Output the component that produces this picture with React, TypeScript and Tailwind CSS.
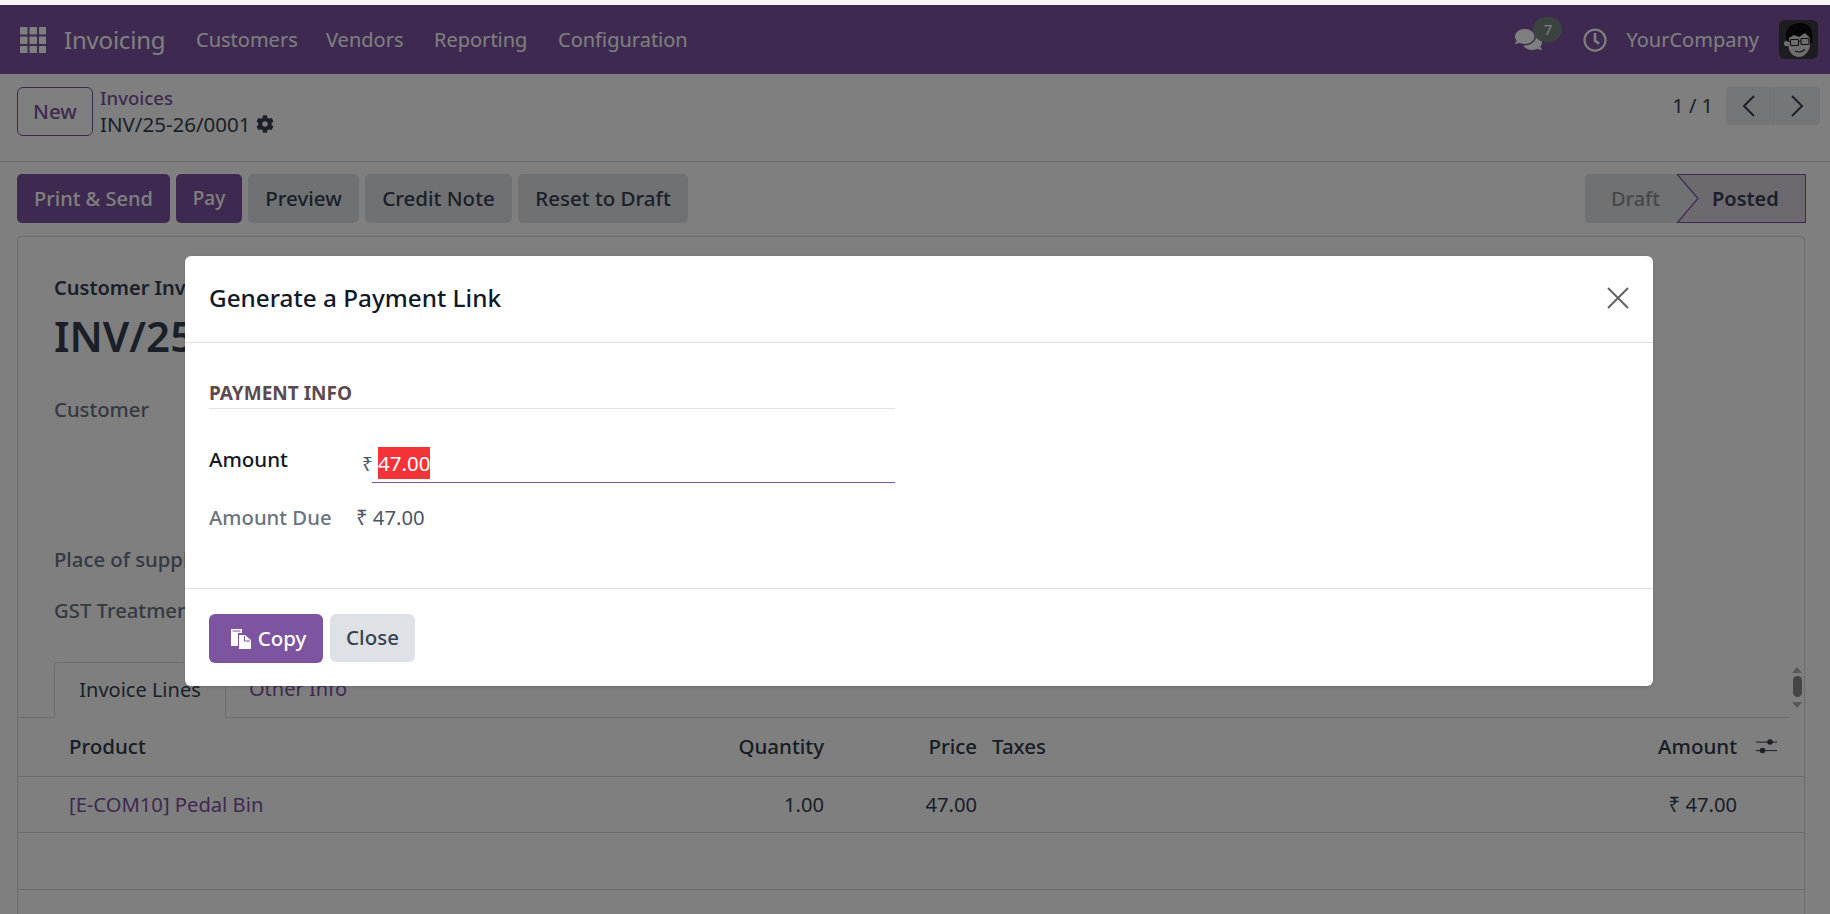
import React from "react";
import { FaCog, FaComments, FaRegClock } from "react-icons/fa";

const Grid = () => (
  <svg width="26" height="26" viewBox="0 0 26 26" fill="#fff">
    {[0, 9.5, 19].map((y) =>
      [0, 9.5, 19].map((x) => <rect key={`${x}-${y}`} x={x} y={y} width="7.5" height="7.5" rx="0.8" />)
    )}
  </svg>
);

const Avatar = () => (
  <svg width="39" height="39" viewBox="0 0 39 39">
    <rect width="39" height="39" rx="6" fill="#3a3a42" />
    <path d="M7 20 C5 9 12 3 21 3 C31 3 35 10 33 22 L30 24 L8 24 Z" fill="#0a0a0c" />
    <path d="M10 18 L15 15 L20 17 L26 13 L31 18 L31 26 C30 32 25 37 20 37 C15 37 10 33 9.5 27 Z" fill="#dcdcdc" />
    <circle cx="7.8" cy="23.5" r="2.8" fill="#dcdcdc" />
    <rect x="11.5" y="19.5" width="8" height="6" rx="0.8" fill="none" stroke="#222" strokeWidth="1.1" />
    <rect x="22" y="18.5" width="8" height="6" rx="0.8" fill="none" stroke="#222" strokeWidth="1.1" />
    <path d="M19.5 21.5 L22 21 M8 21 L11.5 21.5" stroke="#222" strokeWidth="1" />
    <path d="M16 31 Q21 33.5 26 29.5" fill="none" stroke="#222" strokeWidth="1.1" />
  </svg>
);

const Sliders = () => (
  <svg width="22" height="15" viewBox="0 0 22 15" fill="#374151">
    <rect x="0" y="2.6" width="21" height="1" />
    <circle cx="14" cy="3" r="2.8" />
    <rect x="0" y="11.1" width="21" height="1" />
    <circle cx="6.5" cy="11.5" r="2.8" />
  </svg>
);

const CopyIcon = () => (
  <svg width="22" height="22" viewBox="0 0 22 22">
    <path d="M1 1 H12 V5 H8 V18 H1 Z" fill="#fff" />
    <rect x="2.5" y="2.5" width="8" height="1" fill="#7c54a0" />
    <path d="M9 7 H15 L21 12 V21 H9 Z" fill="#fff" />
    <path d="M14.5 8 V13 H20" fill="none" stroke="#7c54a0" strokeWidth="1" />
  </svg>
);

export default function App() {
  return (
    <div className="relative flex h-[914px] w-[1830px] flex-col overflow-hidden bg-white font-['Noto_Sans',sans-serif] text-[#374151]">
      <div className="h-[5px] shrink-0 bg-[#f6f6f6]" />
      <div className="relative flex-1">
        {/* navbar */}
        <div className="flex h-[69px] items-center bg-[#7c54a0] pl-[20px] pr-[12px] text-white">
          <Grid />
          <span className="ml-[18px] w-[100px] text-[24px] tracking-[-0.2px]">Invoicing</span>
          <nav className="ml-[32px] flex text-[20px]">
            <span className="w-[130px]">Customers</span>
            <span className="w-[108px]">Vendors</span>
            <span className="w-[124px]">Reporting</span>
            <span>Configuration</span>
          </nav>
          <div className="relative ml-auto flex items-center">
            <FaComments className="mr-[41px] text-[27px]" />
            <span className="absolute left-[18px] top-[-9px] flex h-[25px] w-[29px] items-center justify-center rounded-full bg-[#78857f] text-[15px]">7</span>
          </div>
          <FaRegClock className="text-[24px]" />
          <span className="ml-[19px] mr-[20px] text-[20px]">YourCompany</span>
          <Avatar />
        </div>

        {/* breadcrumb row */}
        <div className="flex h-[88px] border-b border-[#d8dadd] pl-[17px] pr-[10px] pt-[13px]">
          <button className="h-[49px] w-[76px] rounded-[6px] border border-[#7c54a0] text-[20.5px] font-medium text-[#7c54a0]">New</button>
          <div className="ml-[7px] flex flex-col">
            <span className="h-[24px] text-[18.5px] font-medium leading-[22px] text-[#7c54a0]">Invoices</span>
            <span className="flex items-center gap-[5px] text-[20.5px] leading-[26px]">
              INV/25-26/0001 <FaCog className="text-[18px] text-[#374151]" />
            </span>
          </div>
          <div className="ml-auto flex h-[38px] items-center">
            <span className="mr-[13px] text-[20px]">1 / 1</span>
            <div className="flex h-[38px] w-[94px] rounded-[4px] bg-[#e9ecef] text-[#374151]">
              <span className="flex flex-1 items-center justify-center border-r border-[#dee2e6]">
                <svg width="14" height="22" viewBox="0 0 14 22" fill="none" stroke="currentColor" strokeWidth="2"><path d="M12 1 L2 11 L12 21" /></svg>
              </span>
              <span className="flex flex-1 items-center justify-center">
                <svg width="14" height="22" viewBox="0 0 14 22" fill="none" stroke="currentColor" strokeWidth="2"><path d="M2 1 L12 11 L2 21" /></svg>
              </span>
            </div>
          </div>
        </div>

        {/* action row */}
        <div className="flex h-[74px] pl-[17px] pr-[24px] pt-[12px] text-[20.5px] font-medium">
          <button className="h-[49px] w-[153px] rounded-[5px] bg-[#7c54a0] text-[20px] text-white">Print &amp; Send</button>
          <button className="ml-[6px] h-[49px] w-[66px] rounded-[5px] bg-[#7c54a0] text-[19px] text-white">Pay</button>
          <button className="ml-[6px] h-[49px] w-[111px] rounded-[5px] bg-[#dee2e6]">Preview</button>
          <button className="ml-[6px] h-[49px] w-[147px] rounded-[5px] bg-[#dee2e6]">Credit Note</button>
          <button className="ml-[6px] h-[49px] w-[170px] rounded-[5px] bg-[#dee2e6]">Reset to Draft</button>
          <div className="relative ml-auto flex h-[49px] w-[221px] text-[20px]">
            <div className="flex w-[92px] items-center rounded-l-[4px] bg-[#dee2e6] pl-[26px] text-[#8c9094]">Draft</div>
            <div className="flex flex-1 items-center border-y border-r border-[#7c54a0] bg-[#d8d5de] pl-[35px] font-semibold">Posted</div>
            <svg className="absolute left-[91px] top-0" width="24" height="49" viewBox="0 0 24 49">
              <path d="M1 0 L22 24.5 L1 49 Z" fill="#dee2e6" />
              <path d="M1 0 L22 24.5 L1 49" fill="none" stroke="#7c54a0" strokeWidth="1.2" />
            </svg>
          </div>
        </div>

        {/* sheet */}
        <div className="relative ml-[17px] mr-[25px] flex h-[680px] flex-col rounded-t-[4px] border border-[#d8dadd] bg-white">
          <div className="pl-[36px]">
            <div className="mt-[39px] h-[24px] whitespace-nowrap text-[20px] font-semibold leading-[24px]">Customer Invoice</div>
            <div className="mt-[11px] h-[50px] whitespace-nowrap text-[42px] font-semibold leading-[50px]">INV/25-26/0001</div>
            <div className="mt-[37px] h-[24px] whitespace-nowrap text-[20.3px] font-medium leading-[22px] text-[#6b7280]">Customer</div>
            <div className="mt-[126px] h-[24px] whitespace-nowrap text-[20.3px] font-medium leading-[22px] text-[#6b7280]">Place of supply</div>
            <div className="mt-[27px] h-[24px] whitespace-nowrap text-[20.3px] font-medium leading-[22px] text-[#6b7280]">GST Treatment</div>
          </div>

          {/* tabs */}
          <div className="mr-[15px] mt-[39px] flex h-[56px] border-b border-[#d8dadd] pl-[36px] text-[20px]">
            <div className="-mb-px flex h-[56px] w-[172px] items-center justify-center rounded-t-[4px] border border-b-0 border-[#d8dadd] bg-white pb-[2px]">Invoice Lines</div>
            <div className="ml-[23px] flex items-center pb-[2px] text-[#7c54a0]">Other Info</div>
          </div>

          {/* scroller */}
          <div className="absolute right-[-1px] top-[430px] flex w-[16px] flex-col items-center">
            <span className="h-0 w-0 border-x-[5px] border-b-[6px] border-x-transparent border-b-[#b0b0b0]" />
            <span className="mt-[3px] h-[21px] w-[9px] rounded-full bg-[#8a8a8a]" />
            <span className="mt-[5px] h-0 w-0 border-x-[5px] border-t-[6px] border-x-transparent border-t-[#b0b0b0]" />
          </div>

          {/* table */}
          <div className="flex h-[59px] items-center border-b border-[#d8dadd] pb-[2px] text-[20.5px] font-medium text-[#2f3a4a]">
            <span className="w-[600px] pl-[51px]">Product</span>
            <span className="w-[206px] text-right">Quantity</span>
            <span className="w-[153px] text-right">Price</span>
            <span className="ml-[15px] flex-1">Taxes</span>
            <span className="w-[200px] text-right">Amount</span>
            <span className="flex w-[67px] justify-end pr-[26px]"><Sliders /></span>
          </div>
          <div className="flex h-[56px] items-center border-b border-[#d8dadd] text-[20.2px]">
            <span className="w-[600px] pl-[51px] text-[#7c54a0]">[E-COM10] Pedal Bin</span>
            <span className="w-[206px] text-right">1.00</span>
            <span className="w-[153px] text-right">47.00</span>
            <span className="ml-[15px] flex-1" />
            <span className="w-[200px] text-right">₹ 47.00</span>
            <span className="w-[67px]" />
          </div>
          <div className="h-[57px] border-b border-[#d8dadd]" />
        </div>

        {/* backdrop & dialog */}
        <div className="absolute inset-0 bg-black/50">
          <div className="ml-[185px] mt-[251px] h-[430px] w-[1468px] rounded-[6px] bg-white shadow-sm">
            <div className="flex h-[87px] items-center justify-between border-b border-[#dee2e6] pb-[2px] pl-[24px] pr-[23px]">
              <h4 className="text-[24.3px] font-medium leading-none text-[#111827]">Generate a Payment Link</h4>
              <svg width="24" height="24" viewBox="0 0 24 24" fill="none" stroke="#5f6368" strokeWidth="2"><path d="M2 2 L22 22 M22 2 L2 22" /></svg>
            </div>
            <div className="h-[246px] border-b border-[#dee2e6] pl-[24px]">
              <div className="mt-0 w-[686px] pt-[38px]">
                <div className="h-[28px] border-b border-[#dee2e6] text-[19px] font-bold leading-[24px] text-[#5b4a4f]">PAYMENT INFO</div>
                <div className="mt-[38px] flex h-[36px] w-full">
                  <span className="w-[153px] text-[20.5px] font-medium leading-[24px] text-[#111827]">Amount</span>
                  <span className="w-[10px] pt-[4px] text-[19px] leading-[26px] text-[#4b5563]">₹</span>
                  <div className="flex-1 border-b border-[#7c54a0] pl-[6px]">
                    <span className="inline-block h-[32px] bg-[#f43338] text-[20.5px] leading-[32px] text-white">47.00</span>
                  </div>
                </div>
                <div className="mt-[21px] flex h-[26px] items-center text-[20.3px] text-[#6b7280]">
                  <span className="w-[147px] font-medium">Amount Due</span>
                  <span className="text-[#4b5563]">₹ 47.00</span>
                </div>
              </div>
            </div>
            <div className="flex gap-[7px] pl-[24px] pt-[25px] text-[20.5px] font-medium">
              <button className="flex h-[49px] w-[114px] items-center justify-center gap-[6px] rounded-[6px] bg-[#7c54a0] pl-[4px] text-white"><CopyIcon />Copy</button>
              <button className="h-[48px] w-[85px] rounded-[6px] bg-[#dee2e6] pb-[2px] text-[#374151]">Close</button>
            </div>
          </div>
        </div>
      </div>
    </div>
  );
}
